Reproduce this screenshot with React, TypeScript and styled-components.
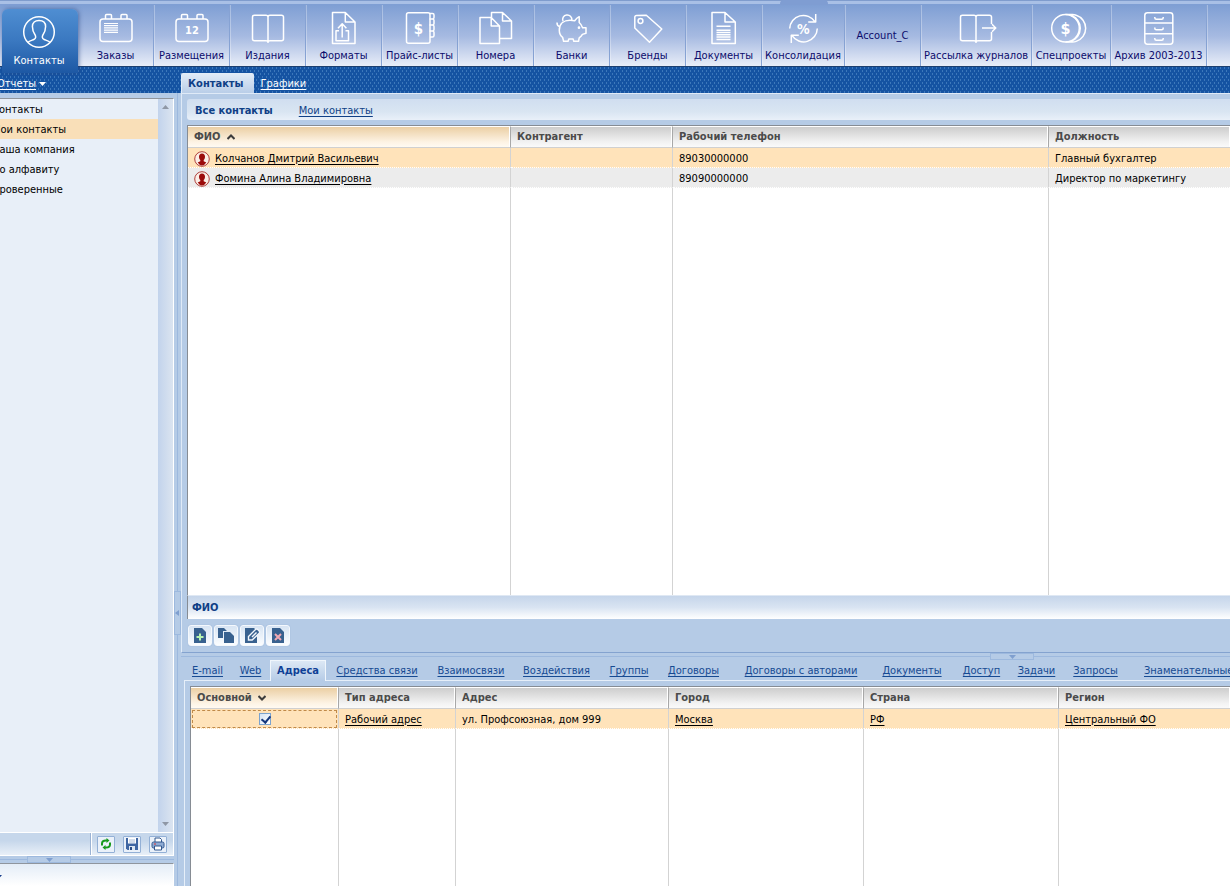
import React from 'react';
import styled, { createGlobalStyle, css } from 'styled-components';

const Global = createGlobalStyle`
  * { box-sizing: border-box; }
  html, body { margin: 0; padding: 0; }
  body {
    font: 11px/16px 'DejaVu Sans Condensed', 'Noto Sans', sans-serif;
    color: #000;
    overflow: hidden;
  }
  button { font: inherit; border: 0; padding: 0; background: none; cursor: pointer; }
  a { color: inherit; text-underline-offset: 2px; }
`;

const Shell = styled.div`
  display: flex;
  flex-direction: column;
  height: 100vh;
  min-height: 600px;
  background: #b5cbe6;
  overflow: hidden;
`;

/* Top navigation */
const TopNav = styled.nav`
  position: relative;
  z-index: 1;
  display: flex;
  flex: none;
  height: 66px;
  padding: 5px 0 0 2px;
  background:
    linear-gradient(#7f9ccd 0 1px, #a9c0e6 1px 4px, transparent 4px),
    linear-gradient(#7f9fd4 5px, #a6bae1 55%, #e8edf8 100%);
`;

const NavHandle = styled.span`
  position: absolute;
  left: 780px;
  top: 0;
  width: 48px;
  height: 5px;
  border-radius: 4px 4px 0 0;
  background: #7f9dd2;
`;

const NavItem = styled.button<{ $w: number; $active?: boolean }>`
  display: flex;
  flex: none;
  flex-direction: column;
  align-items: center;
  width: ${(p) => p.$w}px;
  padding: 7px 0 0;
  gap: 4px;
  color: #0c0c6c;
  white-space: nowrap;
  border-right: 1px solid #86a2d3;
  box-shadow: 1px 0 0 rgba(255, 255, 255, 0.3);
  ${(p) =>
    p.$active &&
    css`
      margin-top: 4px;
      height: 64px;
      padding-right: 2px;
      gap: 5px;
      color: #fff;
      border-right: 0;
      border-radius: 6px 6px 0 0;
      background: linear-gradient(#4f8ed2, #3a78c0 50%, #1d58a4);
      box-shadow: 1px 0 4px rgba(40, 70, 130, 0.6);
    `}
`;

const NavLabelOnly = styled.span`
  margin: auto;
  padding-bottom: 7px;
`;

const NavIcon = styled.svg`
  flex: none;
  width: 40px;
  height: 32px;
  overflow: visible;
  fill: none;
  stroke: #fff;
  stroke-width: 1.5;
  stroke-linejoin: round;
  text {
    fill: #fff;
    stroke: none;
    text-anchor: middle;
    font-weight: bold;
  }
`;

/* Blue band under the navigation */
const Band = styled.div`
  display: flex;
  flex: none;
  align-items: flex-end;
  height: 27px;
  border-top: 1px solid #1c3f70;
  color: #fff;
  background:
    conic-gradient(at 1px 2px, transparent 270deg, #3d78bb 270deg) 0 0 / 4px 6px,
    conic-gradient(at 1px 2px, transparent 270deg, #3d78bb 270deg) 2px 3px / 4px 6px,
    #1553a2;
`;

const Reports = styled.div`
  display: flex;
  align-items: center;
  gap: 3px;
  width: 181px;
  height: 20px;
  padding-top: 1px;
  margin-left: -3px;
  margin-right: 3px;
`;

const Caret = styled.svg`
  width: 7px;
  height: 6px;
  fill: currentColor;
`;

const BandTab = styled.a<{ $active?: boolean }>`
  padding: 0 7px;
  height: 20px;
  line-height: 22px;
  color: #fff;
  ${(p) =>
    p.$active &&
    css`
      padding: 0 10px 0 6px;
      line-height: 20px;
      color: #0f3f86;
      font-weight: bold;
      text-decoration: none;
      border-radius: 2px 2px 0 0;
      border-left: 1px solid #e3edf8;
      border-top: 1px solid #e3edf8;
      background: linear-gradient(#e1ebf7, #b9cee8);
    `}
`;

const Body = styled.div`
  display: flex;
  flex: 1;
  min-height: 0;
`;

/* Sidebar */
const Sidebar = styled.aside`
  display: flex;
  flex: none;
  flex-direction: column;
  width: 174px;
  padding-top: 5px;
`;

const SideBox = styled.div`
  display: flex;
  flex: 1;
  border-top: 1px solid #8f959d;
  border-right: 1px solid #fff;
  background: #e8eff8;
`;

const SideList = styled.ul`
  flex: 1;
  margin: 0;
  padding: 0;
  list-style: none;
  overflow: hidden;
`;

const SideItem = styled.li<{ $active?: boolean }>`
  height: 20px;
  background: ${(p) => (p.$active ? '#f9dfb8' : 'transparent')};
  a {
    display: block;
    margin-left: -8px;
    line-height: 22px;
    text-decoration: none;
  }
`;

const ScrollTrack = styled.div`
  display: flex;
  flex-direction: column;
  justify-content: space-between;
  align-items: center;
  width: 15px;
  padding: 5px 0;
  color: #8f97a5;
  background: linear-gradient(90deg, #c2d3ec, #dbe4f0);
`;

const SideTools = styled.div`
  display: flex;
  flex: none;
  justify-content: flex-end;
  height: 24px;
  border-top: 1px solid #fff;
  border-bottom: 1px solid #fff;
  border-right: 1px solid #fff;
  background: linear-gradient(#c6d7eb, #c6d7eb 35%, #e9f0f8);
`;

const ToolGroup = styled.div`
  display: flex;
  align-items: center;
  gap: 8px;
  padding: 0 6px 0 5px;
  border-left: 1px solid #fff;
  box-shadow: -1px 0 0 #9bb3d4;
`;

const SmallTool = styled.button`
  display: flex;
  align-items: center;
  justify-content: center;
  width: 18px;
  height: 17px;
  border: 1px solid #93b0d6;
  border-radius: 1px;
  background: #eaf1fa;
  svg { width: 14px; height: 14px; }
`;

const SideFoot = styled.div`
  flex: none;
  height: 23px;
  padding-top: 10px;
  border-top: 1px solid #8f959d;
  border-right: 1px solid #fff;
  color: #173d8c;
  background: linear-gradient(#e4edf7, #fff);
  overflow: hidden;
  svg { display: block; margin-left: -5px; }
`;

/* Splitters */
const Splitter = styled.div<{ $vertical?: boolean }>`
  display: flex;
  flex: none;
  justify-content: center;
  align-items: center;
  color: #7f9fcf;
  ${(p) =>
    p.$vertical
      ? css`
          width: 7px;
          background: linear-gradient(90deg, transparent 3px, #9db9de 3px 4px, transparent 4px);
        `
      : css`
          height: 7px;
          background: linear-gradient(transparent 3px, #9db9de 3px 4px, transparent 4px);
        `}
`;

const SideSplitter = styled(Splitter)`
  justify-content: flex-start;
  padding-left: 27px;
`;

const DetailSplitter = styled(Splitter)`
  justify-content: flex-end;
  padding-right: 196px;
`;

const VerticalSplitter = styled(Splitter)`
  align-items: flex-end;
  padding-bottom: 251px;
`;

const Grip = styled.button<{ $vertical?: boolean }>`
  display: flex;
  align-items: center;
  justify-content: center;
  flex: none;
  width: ${(p) => (p.$vertical ? 7 : 44)}px;
  height: ${(p) => (p.$vertical ? 44 : 7)}px;
  color: inherit;
  border: 1px solid #9db9de;
  background: #b5cbe6;
  svg { flex: none; }
`;

/* Main area */
const Main = styled.main`
  display: flex;
  flex: 1;
  flex-direction: column;
  min-width: 0;
`;

const MasterPane = styled.section`
  display: flex;
  flex: 1;
  flex-direction: column;
  min-height: 0;
  padding: 5px 0 0 5px;
  border: solid #dfeaf7;
  border-width: 1px 0 0 1px;
  border-bottom: 1px solid #84a3cf;
`;

const SubTabs = styled.div`
  display: flex;
  flex: none;
  gap: 26px;
  height: 21px;
  padding-left: 8px;
  margin-bottom: 5px;
  line-height: 24px;
  color: #0f3f86;
  border-radius: 3px 0 0 3px;
  background: linear-gradient(#d0def0, #d9e5f2 60%, #e9f0f9);
`;

const GridBox = styled.div`
  display: grid;
  flex: 1;
  min-height: 0;
  border: solid #868c94;
  border-width: 1px 0 0 1px;
  background: #fff;
  overflow: hidden;
`;

const Table = styled.table`
  width: 100%;
  height: 100%;
  table-layout: fixed;
  border-collapse: separate;
  border-spacing: 0;
`;

const Th = styled.th<{ $sorted?: boolean }>`
  height: 22px;
  padding: 0 0 0 6px;
  text-align: left;
  line-height: 16px;
  color: #4b4b4b;
  white-space: nowrap;
  border-top: 1px solid #fff;
  border-bottom: 1px solid #d0d0d0;
  border-right: 1px solid #a8a8a8;
  box-shadow: inset -1px 0 0 #fff;
  background: ${(p) =>
    p.$sorted ? 'linear-gradient(#ebcfa4, #fdf3e4 75%, #fffaf2)' : 'linear-gradient(#cdcdcd, #f2f2f2 75%, #fafafa)'};
  &:last-child { border-right: 0; }
  svg { margin-left: 6px; }
`;

const Row = styled.tr<{ $tone: 'selected' | 'odd' }>`
  height: 20px;
  background: ${(p) => (p.$tone === 'selected' ? '#ffe3ba' : '#ececec')};
`;

const Td = styled.td`
  height: 20px;
  padding: 2px 0 0 6px;
  line-height: 16px;
  white-space: nowrap;
  border-right: 1px solid #d3d3d3;
  border-bottom: 1px dotted #fff;
  &:last-child { border-right: 0; }
`;

const FillerTd = styled.td`
  padding: 0;
  height: 100%;
  border-right: 1px solid #d3d3d3;
  &:last-child { border-right: 0; }
`;

const Person = styled.span`
  display: flex;
  align-items: center;
  gap: 5px;
  svg { width: 16px; height: 16px; flex: none; }
`;

const FocusTd = styled(Td)`
  padding: 0;
  text-align: center;
  label {
    display: flex;
    align-items: center;
    justify-content: center;
    height: 18px;
    margin: 0 1px;
    border: 1px dashed #c08a48;
  }
`;

const Check = styled.input`
  appearance: none;
  width: 12px;
  height: 12px;
  margin: 0;
  border: 1px solid #7ba3cf;
  background: linear-gradient(135deg, #d3e2f4, #fff);
  position: relative;
  &:checked::after {
    content: '';
    position: absolute;
    left: 3px;
    top: 0;
    width: 4px;
    height: 7px;
    border: solid #14377d;
    border-width: 0 2px 2px 0;
    transform: rotate(40deg);
  }
`;

const CardTitle = styled.div`
  flex: none;
  height: 24px;
  padding-left: 4px;
  line-height: 24px;
  font-weight: bold;
  color: #0f3f86;
  border-left: 1px solid #868c94;
  border-top: 1px solid #dfe8f3;
  background: linear-gradient(#c5d5ea, #d9e4f2 50%, #fff);
`;

const Actions = styled.div`
  display: flex;
  flex: none;
  gap: 2px;
  padding: 6px 1px 6px;
`;

const Action = styled.button`
  display: flex;
  align-items: center;
  justify-content: center;
  width: 24px;
  height: 21px;
  border-radius: 3px;
  border: 1px solid #f4f8fd;
  background: linear-gradient(#d7e4f3, #fbfdff);
  box-shadow: 0 0 1px #89a6ce;
  svg { width: 18px; height: 17px; overflow: visible; }
`;

const DetailPane = styled.section`
  display: flex;
  flex: none;
  flex-direction: column;
  height: 226px;
  padding-left: 3px;
`;

const DetailTabs = styled.div`
  display: flex;
  flex: none;
  height: 21px;
  overflow: hidden;
`;

const DetailTab = styled.a<{ $w: number; $active?: boolean }>`
  flex: none;
  width: ${(p) => p.$w}px;
  text-align: center;
  line-height: 22px;
  white-space: nowrap;
  color: #164a92;
  border-bottom: 1px solid #e6eff9;
  ${(p) =>
    p.$active &&
    css`
      color: #0f3f96;
      font-weight: bold;
      text-decoration: none;
      border: 1px solid #f0f6fc;
      border-bottom: 0;
      line-height: 20px;
      background: linear-gradient(#dce8f5, #b5cbe6);
    `}
  &:last-child { flex: 1 0 auto; text-align: left; padding-left: 13px; }
`;

const DetailBody = styled.div`
  display: flex;
  flex: 1;
  flex-direction: column;
  min-height: 0;
  padding: 5px 0 0 5px;
  border-left: 1px solid #e6eff9;
`;

const ICONS: Record<string, React.ReactNode> = {
  contacts: (
    <>
      <circle cx="20" cy="16" r="15.3" />
      <path d="M8.8 26.6c1.6-1.9 4.2-2.3 6-3.1 2.3-1 2.2-3 1.2-4.8-1.8-2.6-2.6-5.3-2.6-8.2 0-3.9 2.6-6 6.6-6s6.6 2.1 6.6 6c0 2.9-.8 5.6-2.6 8.2-1 1.8-1.1 3.800 1.2 4.800 1.8.8 4.4 1.2 6 3.1" />
    </>
  ),
  orders: (
    <>
      <rect x="4" y="7" width="32" height="22.5" rx="3" />
      <path d="M9.5 7V3.5q0-1 1-1h4q1 0 1 1V7M25 7V3.5q0-1 1-1h4q1 0 1 1V7" />
      <path d="M8 11.5h14M8 13.7h14M8 15.9h14M8 18.1h14M8 20.3h14" strokeWidth="1.2" />
    </>
  ),
  placements: (
    <>
      <rect x="4" y="7" width="32" height="22.5" rx="3" />
      <path d="M9.5 7V3.5q0-1 1-1h4q1 0 1 1V7M25 7V3.5q0-1 1-1h4q1 0 1 1V7" />
      <text x="20" y="22" fontSize="11">12</text>
    </>
  ),
  book: <path d="M20 31V5q0-1.7-2-1.7H6.5Q4.5 3.3 4.5 5v22q0 1.7 2 1.7H18q2 0 2 1.3 0-1.3 2-1.3h11.5q2 0 2-1.7V5q0-1.7-2-1.7H22q-2 0-2 1.7" />,
  formats: (
    <path d="M8.5.5h12.8L31 10v21.5H8.5zM21.3.5V10H31M15 18.7h-3v10h12.5v-10h-3M18.2 25.5V12M14 16.2l4.2-4.4 4.2 4.4" />
  ),
  prices: (
    <>
      <rect x="6.5" y=".7" width="23.5" height="30.6" rx="2" />
      <path d="M30 1.5h2.5q1.5 0 1.5 1.5v2.5q0 1.5-1.5 1.5H30h2.5q1.5 0 1.5 1.5v3q0 1.5-1.5 1.5H30h2.5q1.5 0 1.5 1.5v3q0 1.5-1.5 1.5H30h2.5q1.5 0 1.5 1.5v3q0 1.5-1.5 1.5H30" />
      <text x="18.5" y="21.5" fontSize="15">$</text>
    </>
  ),
  numbers: (
    <path d="M4 5.5h11.2l8.3 8.5v17.5H4zM15.2 5.5V14h8.3M15.5 5.5v-5h11L35.5 9v17.5H24M26.5.5V9h9" />
  ),
  bank: (
    <>
      <path d="M27.2 4.7v5.8q2.3 2 3.4 5.2H34v5.5l-3.6 1.2q-1 1.9-3.2 3.4l-.7 3.5h-4.7l-.7-2.2h-4.3l-.7 2.2h-4.5l-1-4q-3.3-2.3-3.3-7c0-7 5-10 10.7-10 2 0 3.2 0 4.7.4q2-2.7 4.5-4z" />
      <path d="M11 9.3a4.6 4.6 0 1 1 8.8-1.2M7.8 14.5q-3-.5-2.8-4" />
      <circle cx="27" cy="15.7" r=".6" />
    </>
  ),
  tag: (
    <>
      <path d="M8.5 3.5l9.8-.2L33.8 17 21.5 30.3 6.8 16V5.2q0-1.7 1.7-1.7z" />
      <circle cx="12.5" cy="9" r="2.4" />
    </>
  ),
  documents: (
    <path d="M8 .5h13L31.3 10v21.5H8zM21 .5V10h10.3M12.5 14.3h14M12.5 18.2h14M12.5 20.5h14M12.5 22.8h14M12.5 25.1h14M12.5 27.4h14" />
  ),
  consolidation: (
    <>
      <path d="M6.7 16.5A13.7 13.7 0 0 1 31.9 9.7M32.7 2v8h-7.5M34.3 16.5A13.7 13.7 0 0 1 9.1 23.6M8.3 31v-7.7h7.5" />
      <text x="20.3" y="21.5" fontSize="14">%</text>
    </>
  ),
  mailing: (
    <path d="M20 31V5q0-1.7-2-1.7H6.5Q4.5 3.3 4.5 5v22q0 1.7 2 1.7H18q2 0 2 1.3 0-1.3 2-1.3h11.5q2 0 2-1.7v-7M35.5 12V5q0-1.7-2-1.7H22q-2 0-2 1.7M26 16h13.5M36 12.3l3.8 3.7-3.8 3.7" />
  ),
  projects: (
    <>
      <circle cx="14.5" cy="16.3" r="13.8" />
      <path d="M19.8 3.2a13.8 13.8 0 0 1 0 26.200M25.200 3.200a13.8 13.8 0 0 1 0 26.200M14.500 2.500h7q2 0 3.700.7M14.500 30.100h7q2 0 3.700-.7" />
      <text x="14.5" y="22" fontSize="16">$</text>
    </>
  ),
  archive: (
    <path d="M8.5.7h22.6q2.7 0 2.7 2.7v26.2q0 2.7-2.7 2.7H8.5q-2.7 0-2.7-2.7V3.4Q5.8.7 8.5.7zM5.8 10.9h28M5.8 21.7h28M15.8 5v.8q0 1.5 1.5 1.5h5.4q1.5 0 1.5-1.5V5M15.8 15.5v.8q0 1.5 1.5 1.5h5.4q1.5 0 1.5-1.5v-.8M15.8 26v.8q0 1.5 1.5 1.5h5.4q1.5 0 1.5-1.5V26" />
  ),
};

const NAV: { label: string; icon?: string; w: number }[] = [
  { label: 'Контакты', icon: 'contacts', w: 76 },
  { label: 'Заказы', icon: 'orders', w: 76 },
  { label: 'Размещения', icon: 'placements', w: 76 },
  { label: 'Издания', icon: 'book', w: 76 },
  { label: 'Форматы', icon: 'formats', w: 76 },
  { label: 'Прайс-листы', icon: 'prices', w: 76 },
  { label: 'Номера', icon: 'numbers', w: 76 },
  { label: 'Банки', icon: 'bank', w: 76 },
  { label: 'Бренды', icon: 'tag', w: 76 },
  { label: 'Документы', icon: 'documents', w: 76 },
  { label: 'Консолидация', icon: 'consolidation', w: 83 },
  { label: 'Account_C', w: 76 },
  { label: 'Рассылка журналов', icon: 'mailing', w: 111 },
  { label: 'Спецпроекты', icon: 'projects', w: 79 },
  { label: 'Архив 2003-2013', icon: 'archive', w: 96 },
];

const SIDE = ['Контакты', 'Мои контакты', 'Наша компания', 'По алфавиту', 'Проверенные'];

const TABS: [string, number][] = [
  ['E-mail', 47],
  ['Web', 39],
  ['Адреса', 56],
  ['Средства связи', 102],
  ['Взаимосвязи', 86],
  ['Воздействия', 85],
  ['Группы', 60],
  ['Договоры', 69],
  ['Договоры с авторами', 146],
  ['Документы', 76],
  ['Доступ', 63],
  ['Задачи', 47],
  ['Запросы', 71],
  ['Знаменательные даты', 120],
];

const PEOPLE = [
  { name: 'Колчанов Дмитрий Васильевич', phone: '89030000000', post: 'Главный бухгалтер' },
  { name: 'Фомина Алина Владимировна', phone: '89090000000', post: 'Директор по маркетингу' },
];

const Triangle = ({ dir }: { dir: 'up' | 'down' | 'left' }) => {
  const d = { up: 'M0 5h7L3.5 1z', down: 'M0 1h7L3.5 5z', left: 'M5 0v6L1 3z' }[dir];
  return (
    <Caret viewBox="0 0 7 6" aria-hidden>
      <path d={d} />
    </Caret>
  );
};

const SortMark = ({ up }: { up?: boolean }) => (
  <svg width="8" height="6" viewBox="0 0 8 6" fill="none" stroke="#3c3c3c" strokeWidth="2" aria-hidden>
    <path d={up ? 'M.5 5 4 1.5 7.5 5' : 'M.5 1 4 4.5 7.5 1'} />
  </svg>
);

const Avatar = () => (
  <svg viewBox="0 0 16 16" aria-hidden>
    <circle cx="8" cy="8" r="7.3" fill="#fbeee6" stroke="#b0413c" />
    <path d="M8 2.5c2 0 3 1.3 3 3.2 0 1.5-.6 2.6-1.3 3.4v1.2l2.6 1.2A6 6 0 0 1 8 14.5a6 6 0 0 1-4.3-3l2.6-1.2V9.1C5.6 8.3 5 7.2 5 5.7c0-1.9 1-3.2 3-3.2z" fill="#9b0b0b" />
  </svg>
);

const DOC = 'M3 1h8l4 4v11H3z';

export default function App() {
  return (
    <Shell>
      <Global />
      <TopNav>
        <NavHandle />
        {NAV.map((n, i) => (
          <NavItem key={n.label} $w={n.w} $active={i === 0}>
            {n.icon ? (
              <>
                <NavIcon viewBox="0 0 40 32" aria-hidden>{ICONS[n.icon]}</NavIcon>
                <span>{n.label}</span>
              </>
            ) : (
              <NavLabelOnly>{n.label}</NavLabelOnly>
            )}
          </NavItem>
        ))}
      </TopNav>
      <Band>
        <Reports>
          <a href="#reports">Отчеты</a>
          <Triangle dir="down" />
        </Reports>
        <BandTab href="#contacts" $active>Контакты</BandTab>
        <BandTab href="#charts">Графики</BandTab>
      </Band>
      <Body>
        <Sidebar>
          <SideBox>
            <SideList>
              {SIDE.map((s, i) => (
                <SideItem key={s} $active={i === 1}>
                  <a href="#list">{s}</a>
                </SideItem>
              ))}
            </SideList>
            <ScrollTrack>
              <Triangle dir="up" />
              <Triangle dir="down" />
            </ScrollTrack>
          </SideBox>
          <SideTools>
            <ToolGroup>
              <SmallTool aria-label="Обновить">
                <svg viewBox="0 0 14 14" fill="none" stroke="#169a1c" strokeWidth="2">
                  <path d="M3 8.5V6.5q0-3 4-3h1M11 5.5v2q0 3-4 3H6" />
                  <path d="M7.5 1v5l3-2.5zM6.5 8v5l-3-2.5z" fill="#169a1c" stroke="none" />
                </svg>
              </SmallTool>
              <SmallTool aria-label="Сохранить">
                <svg viewBox="0 0 14 14">
                  <path d="M1 1h12v12H2.5L1 11.5z" fill="#3f66a3" />
                  <path d="M3 1h8v5.5H3z" fill="#fff" />
                  <path d="M4 3h6M4 5h6" stroke="#a9bcd8" />
                  <path d="M4 9h6v4H4z" fill="#dde7f3" />
                  <path d="M5 10h2v3H5z" fill="#2a4c86" />
                </svg>
              </SmallTool>
              <SmallTool aria-label="Печать">
                <svg viewBox="0 0 14 14" stroke="#33588f">
                  <path d="M4 5V1h5l1.5 1.5V5" fill="#fff" />
                  <rect x="1" y="5" width="12" height="6" rx="1.5" fill="#8fabd3" />
                  <path d="M3.5 9h7v4h-7z" fill="#fff" />
                  <path d="M3 7h2" stroke="#d33" />
                </svg>
              </SmallTool>
            </ToolGroup>
          </SideTools>
          <SideSplitter>
            <Grip aria-label="Свернуть панель"><Triangle dir="down" /></Grip>
          </SideSplitter>
          <SideFoot><Triangle dir="down" /></SideFoot>
        </Sidebar>
        <VerticalSplitter $vertical>
          <Grip $vertical aria-label="Свернуть меню"><Triangle dir="left" /></Grip>
        </VerticalSplitter>
        <Main>
          <MasterPane>
            <SubTabs>
              <b>Все контакты</b>
              <a href="#mine">Мои контакты</a>
            </SubTabs>
            <GridBox>
              <Table>
                <colgroup>
                  <col width="323" />
                  <col width="162" />
                  <col width="376" />
                  <col />
                </colgroup>
                <thead>
                  <tr>
                    <Th $sorted>ФИО<SortMark up /></Th>
                    <Th>Контрагент</Th>
                    <Th>Рабочий телефон</Th>
                    <Th>Должность</Th>
                  </tr>
                </thead>
                <tbody>
                  {PEOPLE.map((p, i) => (
                    <Row key={p.phone} $tone={i === 0 ? 'selected' : 'odd'}>
                      <Td><Person><Avatar /><a href="#person">{p.name}</a></Person></Td>
                      <Td />
                      <Td>{p.phone}</Td>
                      <Td>{p.post}</Td>
                    </Row>
                  ))}
                  <tr aria-hidden>
                    <FillerTd /><FillerTd /><FillerTd /><FillerTd />
                  </tr>
                </tbody>
              </Table>
            </GridBox>
            <CardTitle>ФИО</CardTitle>
            <Actions>
              <Action aria-label="Добавить">
                <svg viewBox="0 0 18 17">
                  <path d={DOC} fill="#38618f" />
                  <path d="M9 6.5v7M5.5 10h7" stroke="#b6f5b0" strokeWidth="2" />
                </svg>
              </Action>
              <Action aria-label="Копировать">
                <svg viewBox="0 0 18 17">
                  <path d="M1 1h6l3 3H6v7H1z" fill="#38618f" />
                  <path d="M7 5h6l4 4v7H7z" fill="#38618f" />
                </svg>
              </Action>
              <Action aria-label="Изменить">
                <svg viewBox="0 0 18 17">
                  <path d="M2 1h9l3 3v12H2z" fill="#38618f" />
                  <path d="M5.5 13V9.500l7-7q1.3-1 2.5.2l1 1q1.2 1.3.2 2.5l-7 6.8z" fill="#38618f" stroke="#f1f6fc" strokeWidth="1.4" />
                  <path d="M9 10l4.5-4.5" stroke="#f1f6fc" strokeWidth="1.4" />
                </svg>
              </Action>
              <Action aria-label="Удалить">
                <svg viewBox="0 0 18 17">
                  <path d={DOC} fill="#38618f" />
                  <path d="M6 7l6 6M12 7l-6 6" stroke="#f0a9b4" strokeWidth="2" />
                </svg>
              </Action>
            </Actions>
          </MasterPane>
          <DetailSplitter>
            <Grip aria-label="Свернуть детали"><Triangle dir="down" /></Grip>
          </DetailSplitter>
          <DetailPane>
            <DetailTabs>
              {TABS.map(([t, w]) => (
                <DetailTab key={t} href="#tab" $w={w} $active={t === 'Адреса'}>{t}</DetailTab>
              ))}
            </DetailTabs>
            <DetailBody>
              <GridBox>
                <Table>
                  <colgroup>
                    <col width="148" />
                    <col width="117" />
                    <col width="213" />
                    <col width="195" />
                    <col width="195" />
                    <col />
                  </colgroup>
                  <thead>
                    <tr>
                      <Th $sorted>Основной<SortMark /></Th>
                      <Th>Тип адреса</Th>
                      <Th>Адрес</Th>
                      <Th>Город</Th>
                      <Th>Страна</Th>
                      <Th>Регион</Th>
                    </tr>
                  </thead>
                  <tbody>
                    <Row $tone="selected">
                      <FocusTd><label><Check type="checkbox" defaultChecked aria-label="Основной" /></label></FocusTd>
                      <Td><a href="#type">Рабочий адрес</a></Td>
                      <Td>ул. Профсоюзная, дом 999</Td>
                      <Td><a href="#city">Москва</a></Td>
                      <Td><a href="#country">РФ</a></Td>
                      <Td><a href="#region">Центральный ФО</a></Td>
                    </Row>
                    <tr aria-hidden>
                      <FillerTd /><FillerTd /><FillerTd /><FillerTd /><FillerTd /><FillerTd />
                    </tr>
                  </tbody>
                </Table>
              </GridBox>
            </DetailBody>
          </DetailPane>
        </Main>
      </Body>
    </Shell>
  );
}
